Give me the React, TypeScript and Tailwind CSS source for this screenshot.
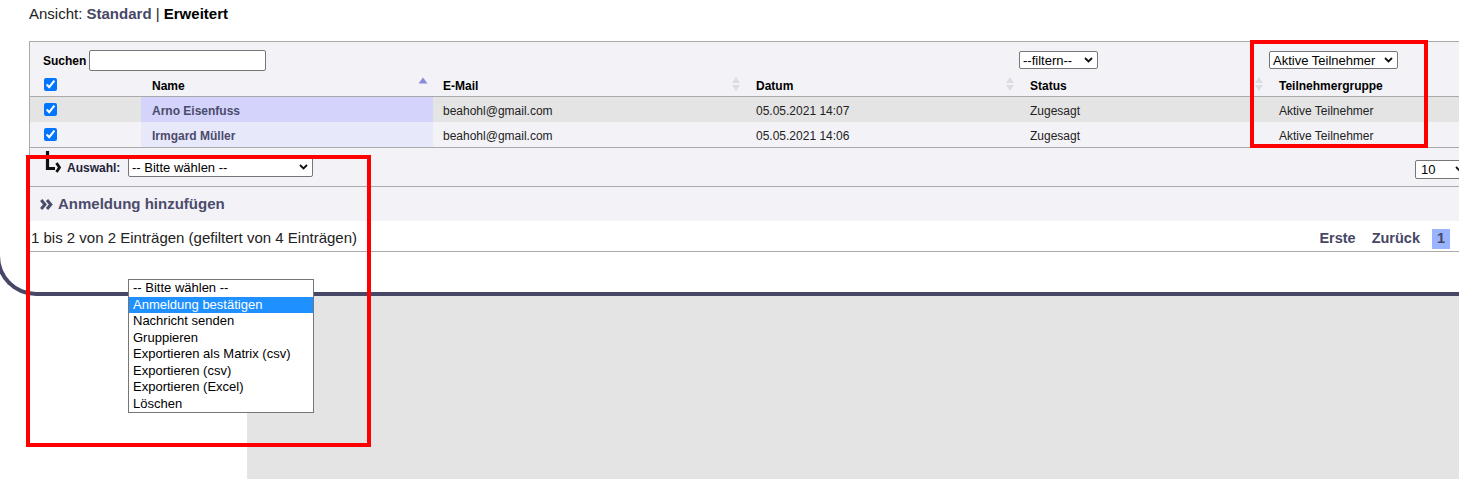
import type { ReactNode } from "react";

const cols = "grid grid-cols-[111px_292px_313px_274px_249px_1fr]";

function Chevron() {
  return (
    <svg width="9" height="6" viewBox="0 0 9 6" className="shrink-0">
      <path d="M1 1 L4.5 4.5 L8 1" fill="none" stroke="#111" strokeWidth="1.8" />
    </svg>
  );
}

function FakeSelect({ label, className }: { label: string; className: string }) {
  return (
    <div
      className={
        "flex items-center justify-between rounded-[2px] border border-[#767676] bg-white pl-[3px] pr-[4px] text-[13px] leading-none text-black " +
        className
      }
    >
      <span className="whitespace-nowrap">{label}</span>
      <Chevron />
    </div>
  );
}

function SortBoth() {
  return (
    <svg width="8" height="16" viewBox="0 0 8 16" className="shrink-0">
      <path d="M4 1 L8 7 L0 7 Z" fill="#dcdce2" />
      <path d="M4 15 L8 9 L0 9 Z" fill="#dcdce2" />
    </svg>
  );
}

function SortUp() {
  return (
    <svg width="10" height="7" viewBox="0 0 10 7" className="shrink-0">
      <path d="M5 0.5 L9.5 6.5 L0.5 6.5 Z" fill="#8a8ad9" />
    </svg>
  );
}

function Check() {
  return <input type="checkbox" checked readOnly className="m-0 block h-[13px] w-[13px]" />;
}

function HeadCell({ label, icon, pr }: { label: string; icon?: ReactNode; pr: string }) {
  return (
    <div className={"flex justify-between pl-[10px] " + pr}>
      <span className="pt-[9px] text-[12px] font-bold leading-[14px] text-black">{label}</span>
      {icon}
    </div>
  );
}

const rows = [
  { name: "Arno Eisenfuss", date: "05.05.2021 14:07", bg: "bg-[#e4e4e4]", nameBg: "bg-[#d3d3fb]" },
  { name: "Irmgard Müller", date: "05.05.2021 14:06", bg: "bg-[#f3f2f7]", nameBg: "bg-[#e8e8fb]" },
];

const options = [
  "-- Bitte wählen --",
  "Anmeldung bestätigen",
  "Nachricht senden",
  "Gruppieren",
  "Exportieren als Matrix (csv)",
  "Exportieren (csv)",
  "Exportieren (Excel)",
  "Löschen",
];

export default function App() {
  return (
    <div className="relative h-[479px] w-[1459px] overflow-hidden bg-white font-['Liberation_Sans',Arial,sans-serif] text-[#222]">
      <div className="h-[41px] pl-[29px] pt-[6px] text-[15px] leading-4">
        Ansicht: <b className="text-[#474766]">Standard</b> | <b className="text-black">Erweitert</b>
      </div>

      <div className="ml-[29px] w-[1480px] border-l border-t border-[#aaaaaa] bg-[#f3f2f7]">
        <div className={cols + " mt-[8px] h-[20px]"}>
          <div className="col-span-2 flex items-center pl-[13px]">
            <span className="text-[12px] font-bold text-black">Suchen</span>
            <div className="ml-[3px] h-[21px] w-[177px] rounded-[2px] border border-[#767676] bg-white" />
          </div>
          <div />
          <div />
          <div className="pt-[1px]">
            <FakeSelect label="--filtern--" className="-ml-[1px] h-[18px] w-[79px]" />
          </div>
          <div className="pt-[1px]">
            <FakeSelect label="Aktive Teilnehmer" className="h-[18px] w-[129px]" />
          </div>
        </div>

        <div className={cols + " h-[27px] border-b border-[#aaaaaa]"}>
          <div className="pl-[14px] pt-[8px]">
            <Check />
          </div>
          <div className="flex justify-between pl-[11px] pr-[5px]">
            <span className="pt-[9px] text-[12px] font-bold leading-[14px] text-black">Name</span>
            <span className="pt-[7px]">
              <SortUp />
            </span>
          </div>
          <HeadCell label="E-Mail" pr="pr-[6px]" icon={<span className="pt-[6px]"><SortBoth /></span>} />
          <HeadCell label="Datum" pr="pr-[6px]" icon={<span className="pt-[6px]"><SortBoth /></span>} />
          <HeadCell label="Status" pr="pr-[6px]" icon={<span className="pt-[6px]"><SortBoth /></span>} />
          <HeadCell label="Teilnehmergruppe" pr="" />
        </div>

        {rows.map((r, i) => (
          <div
            key={r.name}
            className={
              cols +
              " items-stretch text-[12px] " +
              r.bg +
              (i === rows.length - 1 ? " h-[26px] border-b border-[#aaaaaa]" : " h-[25px]")
            }
          >
            <div className="flex items-center pl-[14px]">
              <Check />
            </div>
            <div className={"flex items-center pl-[11px] pt-[3px] font-bold text-[#4b4b6b] " + r.nameBg}>{r.name}</div>
            <div className="flex items-center pl-[10px] pt-[3px]">beahohl@gmail.com</div>
            <div className="flex items-center pl-[10px] pt-[3px]">{r.date}</div>
            <div className="flex items-center pl-[10px] pt-[3px]">Zugesagt</div>
            <div className="flex items-center pl-[10px] pt-[3px]">Aktive Teilnehmer</div>
          </div>
        ))}

        <div className="flex h-[39px] items-center border-b border-[#aaaaaa]">
          <svg width="16" height="22" viewBox="0 0 16 22" className="ml-[15px] mt-[3px] self-start">
            <path d="M2.5 0 V17.5 H10" fill="none" stroke="#111" strokeWidth="3.2" />
            <path d="M11.5 12 L14.5 16.5 L11.5 21" fill="none" stroke="#111" strokeWidth="2.8" />
          </svg>
          <span className="ml-[6px] w-[61px] pt-[1px] text-[12px] font-bold text-[#1f1f3a]">Auswahl:</span>
          <FakeSelect label="-- Bitte wählen --" className="h-[20px] w-[185px]" />
          <FakeSelect label="10" className="ml-auto mr-[40px] mt-[4px] h-[19px] w-[54px] pl-[5px]" />
        </div>

        <div className="flex h-[34px] items-center pl-[10px]">
          <svg width="13" height="11" viewBox="0 0 13 11">
            <path d="M1.2 1 L5 5.5 L1.2 10 M7 1 L10.8 5.5 L7 10" fill="none" stroke="#4b4b6b" strokeWidth="3" />
          </svg>
          <span className="ml-[5px] text-[15px] font-bold text-[#4b4b6b]">Anmeldung hinzufügen</span>
        </div>

        <div className="flex h-[31px] justify-between border-b border-[#aaaaaa] bg-white">
          <span className="pl-[1px] pt-[9px] text-[15px] leading-4 text-[#222]">
            1 bis 2 von 2 Einträgen (gefiltert von 4 Einträgen)
          </span>
          <div className="mr-[59px] mt-[8px] flex h-[20px] items-center text-[14.5px] font-bold text-[#474766]">
            <span>Erste</span>
            <span className="ml-[16px]">Zurück</span>
            <span className="ml-[12px] flex h-[20px] w-[18px] items-center justify-center bg-[#99b3ff]">1</span>
          </div>
        </div>
      </div>

      <div className="-ml-[4px] h-[44px] w-[1480px] rounded-bl-[40px] border-b-4 border-l-4 border-[#474766]" />
      <div className="ml-[247px] h-[183px] bg-[#e4e4e4]" />

      <div className="absolute left-[128px] top-[279px] w-[186px] border border-[#767676] bg-white text-[13px] leading-[16.5px] text-black">
        {options.map((o, i) => (
          <div key={o} className={"pl-[4px] " + (i === 1 ? "bg-[#1e90ff] text-white" : "")}>
            {o}
          </div>
        ))}
      </div>

      <div className="absolute left-[1250px] top-[40px] h-[108px] w-[178px] border-4 border-[#ff0000]" />
      <div className="absolute left-[26px] top-[155px] h-[292px] w-[345px] border-4 border-[#ff0000]" />
    </div>
  );
}
